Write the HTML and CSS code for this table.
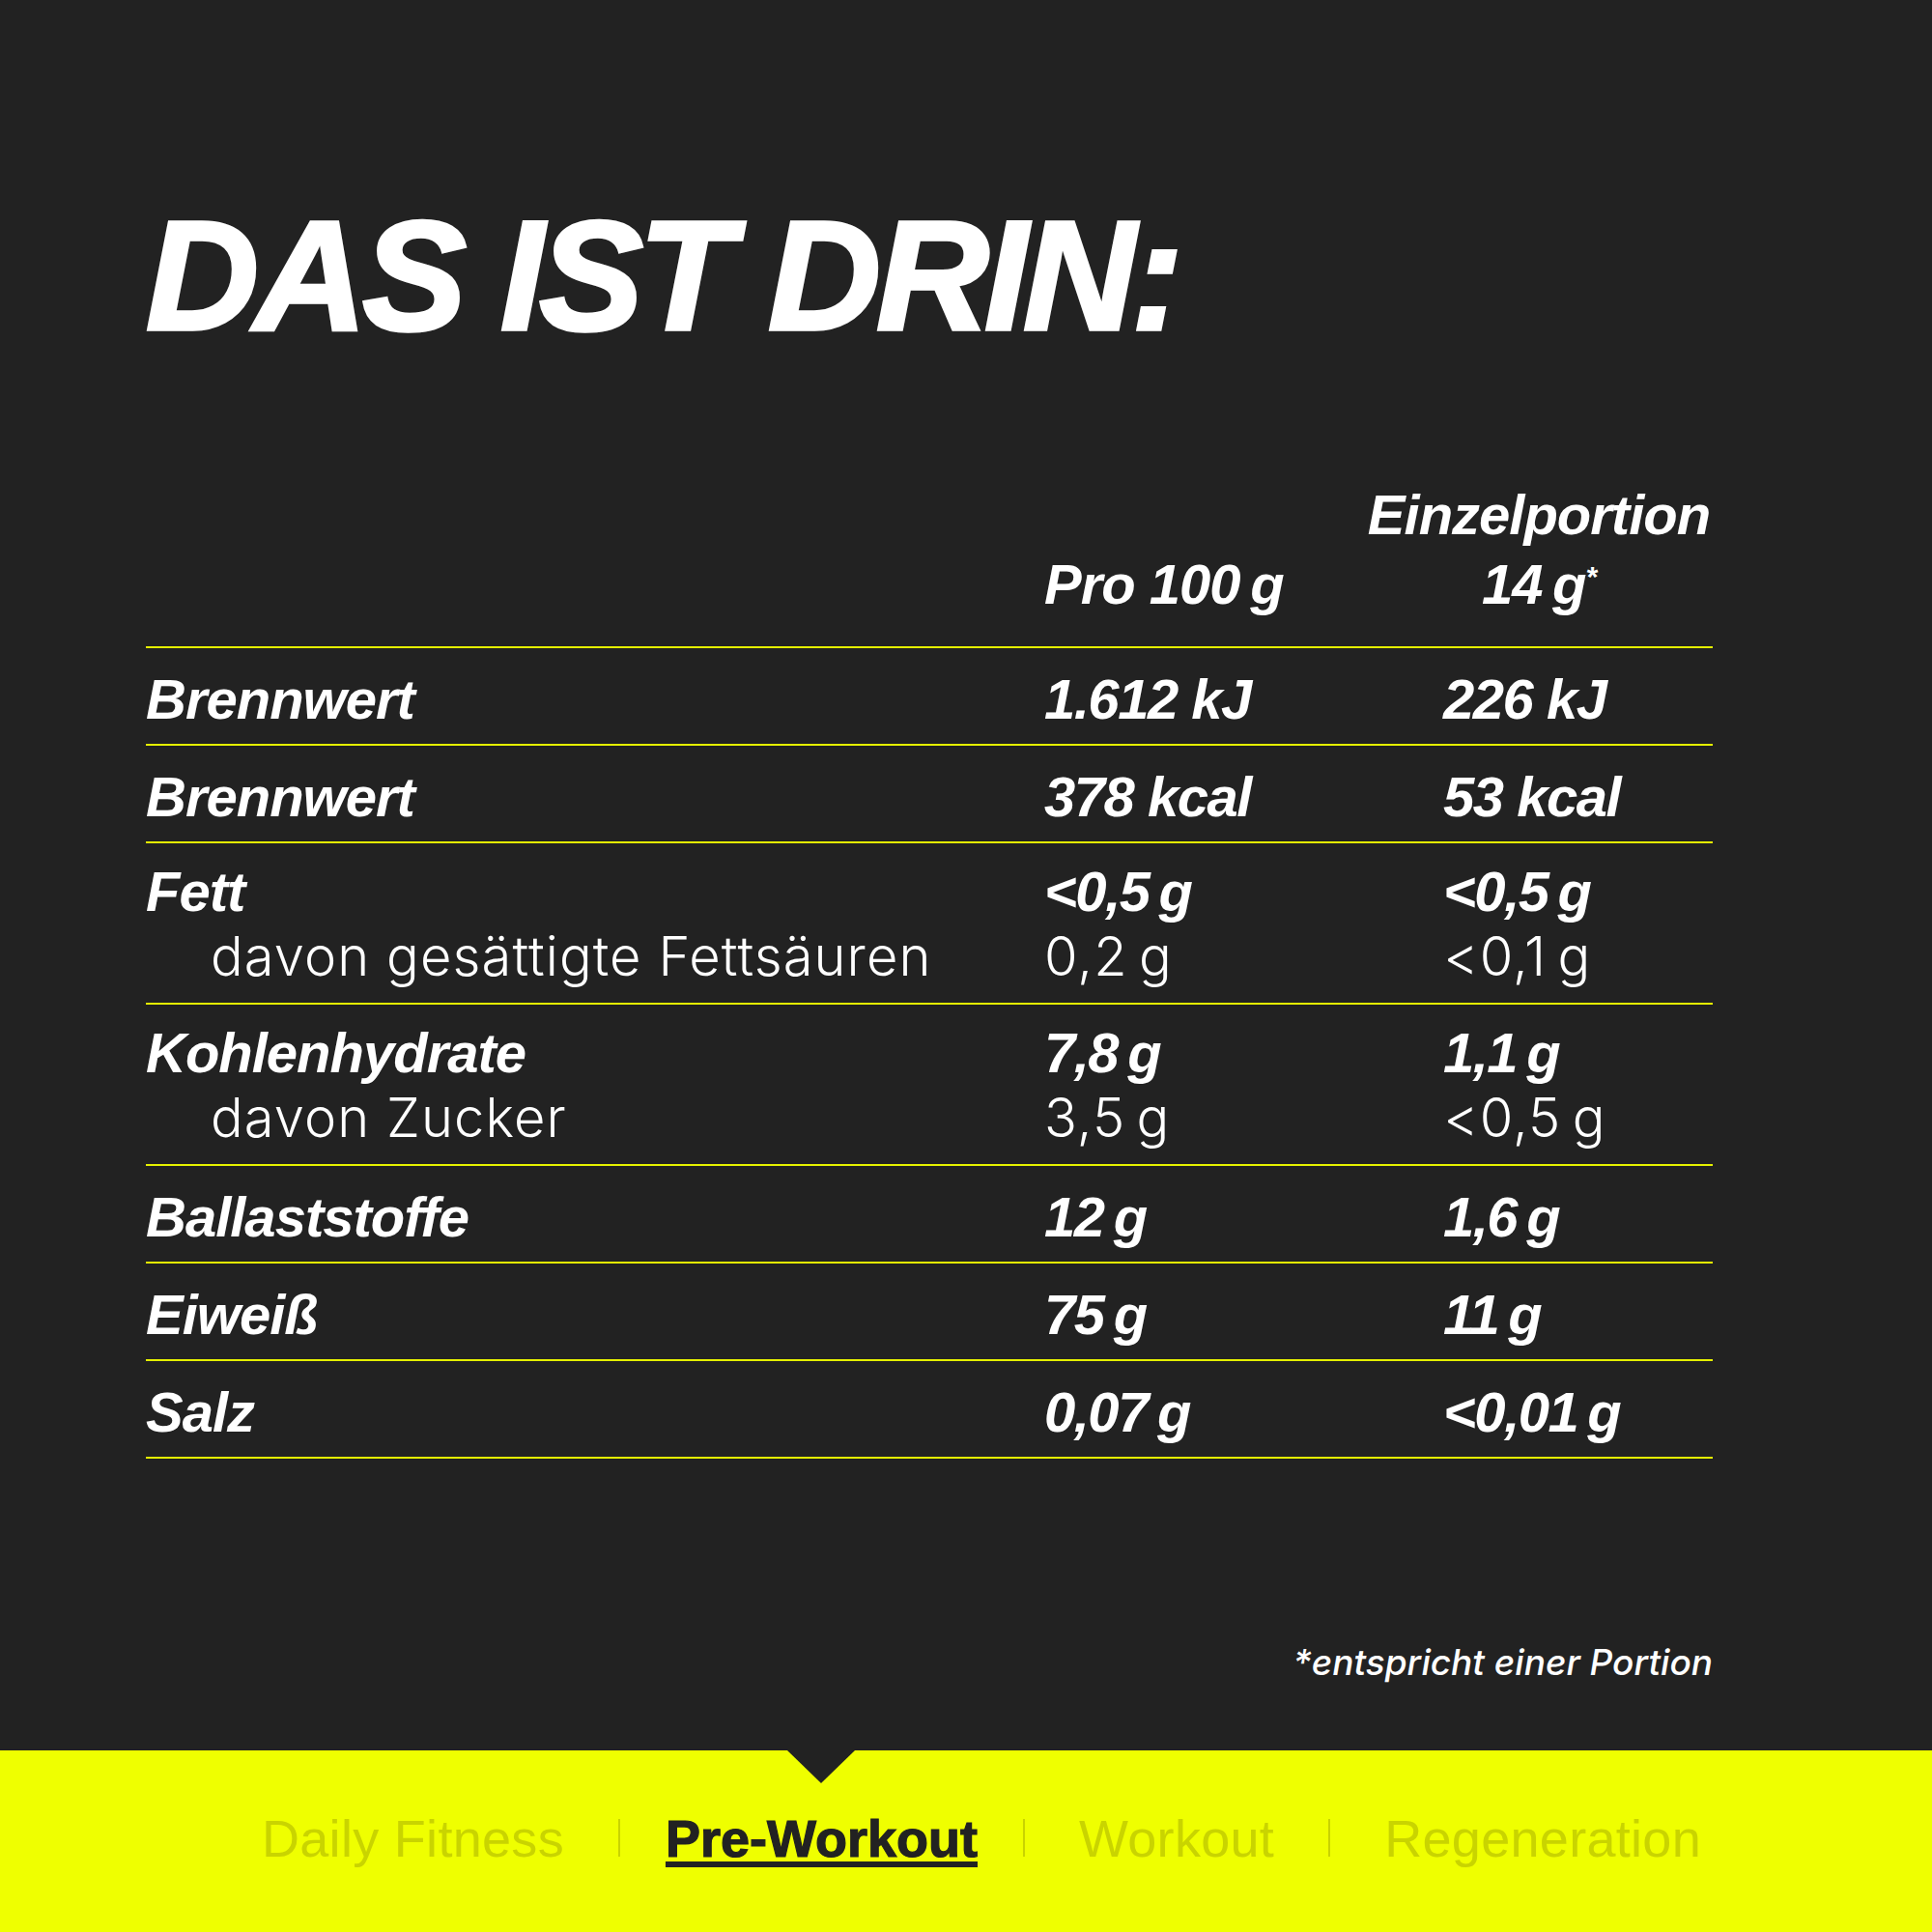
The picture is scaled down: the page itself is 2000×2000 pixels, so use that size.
FILE: index.html
```html
<!DOCTYPE html>
<html lang="de">
<head>
<meta charset="utf-8">
<title>Das ist drin</title>
<link rel="stylesheet" href="styles.css">
</head>
<body>
<div class="page">
  <main class="content">
    <h1 class="title">DAS IST DRIN:</h1>
    <div class="table">
      <div class="row head">
        <div class="cell"></div>
        <div class="cell hcol">Pro 100&thinsp;g</div>
        <div class="cell hcol center">Einzelportion<br>14&thinsp;g<span class="ast">*</span></div>
      </div>
      <div class="row">
        <div class="cell name">Brennwert</div>
        <div class="cell val">1.612 kJ</div>
        <div class="cell val c3">226 kJ</div>
      </div>
      <div class="row">
        <div class="cell name">Brennwert</div>
        <div class="cell val">378 kcal</div>
        <div class="cell val c3">53 kcal</div>
      </div>
      <div class="row double">
        <div class="cell"><div class="name">Fett</div><div class="sub indent">davon gesättigte Fettsäuren</div></div>
        <div class="cell"><div class="val">&lt;0,5&thinsp;g</div><div class="sub">0,2&thinsp;g</div></div>
        <div class="cell c3"><div class="val">&lt;0,5&thinsp;g</div><div class="sub">&lt;0,1&thinsp;g</div></div>
      </div>
      <div class="row double">
        <div class="cell"><div class="name">Kohlenhydrate</div><div class="sub indent">davon Zucker</div></div>
        <div class="cell"><div class="val">7,8&thinsp;g</div><div class="sub">3,5&thinsp;g</div></div>
        <div class="cell c3"><div class="val">1,1&thinsp;g</div><div class="sub">&lt;0,5&thinsp;g</div></div>
      </div>
      <div class="row">
        <div class="cell name">Ballaststoffe</div>
        <div class="cell val">12&thinsp;g</div>
        <div class="cell val c3">1,6&thinsp;g</div>
      </div>
      <div class="row">
        <div class="cell name">Eiweiß</div>
        <div class="cell val">75&thinsp;g</div>
        <div class="cell val c3">11&thinsp;g</div>
      </div>
      <div class="row">
        <div class="cell name">Salz</div>
        <div class="cell val">0,07&thinsp;g</div>
        <div class="cell val c3">&lt;0,01&thinsp;g</div>
      </div>
    </div>
    <p class="note">*entspricht einer Portion</p>
  </main>
  <nav class="nav">
    <span class="nav-item">Daily Fitness</span>
    <span class="sep"></span>
    <span class="nav-item active">Pre-Workout</span>
    <span class="sep"></span>
    <span class="nav-item">Workout</span>
    <span class="sep"></span>
    <span class="nav-item">Regeneration</span>
  </nav>
</div>
</body>
</html>
```
FILE: styles.css
```css
* { box-sizing: border-box; }
html, body { margin: 0; padding: 0; }
body { background: #222222; width: 2000px; height: 2000px; }

.page {
  display: flex;
  flex-direction: column;
  height: 2000px;
  background: #222222;
  color: #ffffff;
  font-family: "Liberation Sans", Arial, sans-serif;
}

.content {
  flex: 1;
  padding: 204px 227px 0 151px;
}

.title {
  margin: 0 0 131px;
  font-size: 162px;
  line-height: 162px;
  font-weight: 700;
  font-style: italic;
  letter-spacing: -5px;
  -webkit-text-stroke: 3.5px #ffffff;
}

.row {
  display: grid;
  grid-template-columns: 930px 332px 360px;
  border-bottom: 2px solid #e4f000;
  padding: 21px 0 14px;
}
.row.head { padding: 0 0 28px; align-items: end; }
.row.double { padding: 18px 0 12px; }

.name, .val, .hcol {
  font-size: 58px;
  line-height: 64px;
  font-weight: 700;
  font-style: italic;
  letter-spacing: -1px;
}
.val { letter-spacing: -1.5px; }
.hcol { line-height: 72px; }
.center { text-align: center; }
.c3 { padding-left: 81px; }

.ast {
  font-size: 30px;
  line-height: 0;
  vertical-align: 18px;
}

.sub {
  font-family: Inter, "Liberation Sans", sans-serif;
  font-weight: 300;
  font-size: 56px;
  line-height: 71px;
  letter-spacing: 1.1px;
}
.sub.indent { padding-left: 67px; }

.note {
  margin: 189px 0 0;
  text-align: right;
  font-family: Inter, "Liberation Sans", sans-serif;
  font-style: italic;
  font-weight: 500;
  font-size: 37px;
  line-height: 44px;
}

.nav {
  height: 188px;
  flex: none;
  background: #efff00;
  display: flex;
  justify-content: center;
  align-items: flex-start;
  gap: 47px;
  padding: 61px 0 0 32px;
}
.nav-item {
  position: relative;
  font-size: 54px;
  line-height: 60px;
  letter-spacing: 0.3px;
  color: #c9d400;
  padding: 0 9px;
}
.nav-item.active {
  padding: 0;
  color: #222222;
  font-weight: 700;
  letter-spacing: 0;
  -webkit-text-stroke: 1.2px #222222;
  text-decoration: underline;
  text-decoration-thickness: 6px;
  text-underline-offset: 5px;
}
.nav-item.active::before {
  content: "";
  position: absolute;
  top: -61px;
  left: 50%;
  transform: translateX(-50%);
  border-left: 35px solid transparent;
  border-right: 35px solid transparent;
  border-top: 34px solid #222222;
}
.sep {
  width: 2px;
  height: 39px;
  margin-top: 10px;
  background: #c9d400;
}
```
